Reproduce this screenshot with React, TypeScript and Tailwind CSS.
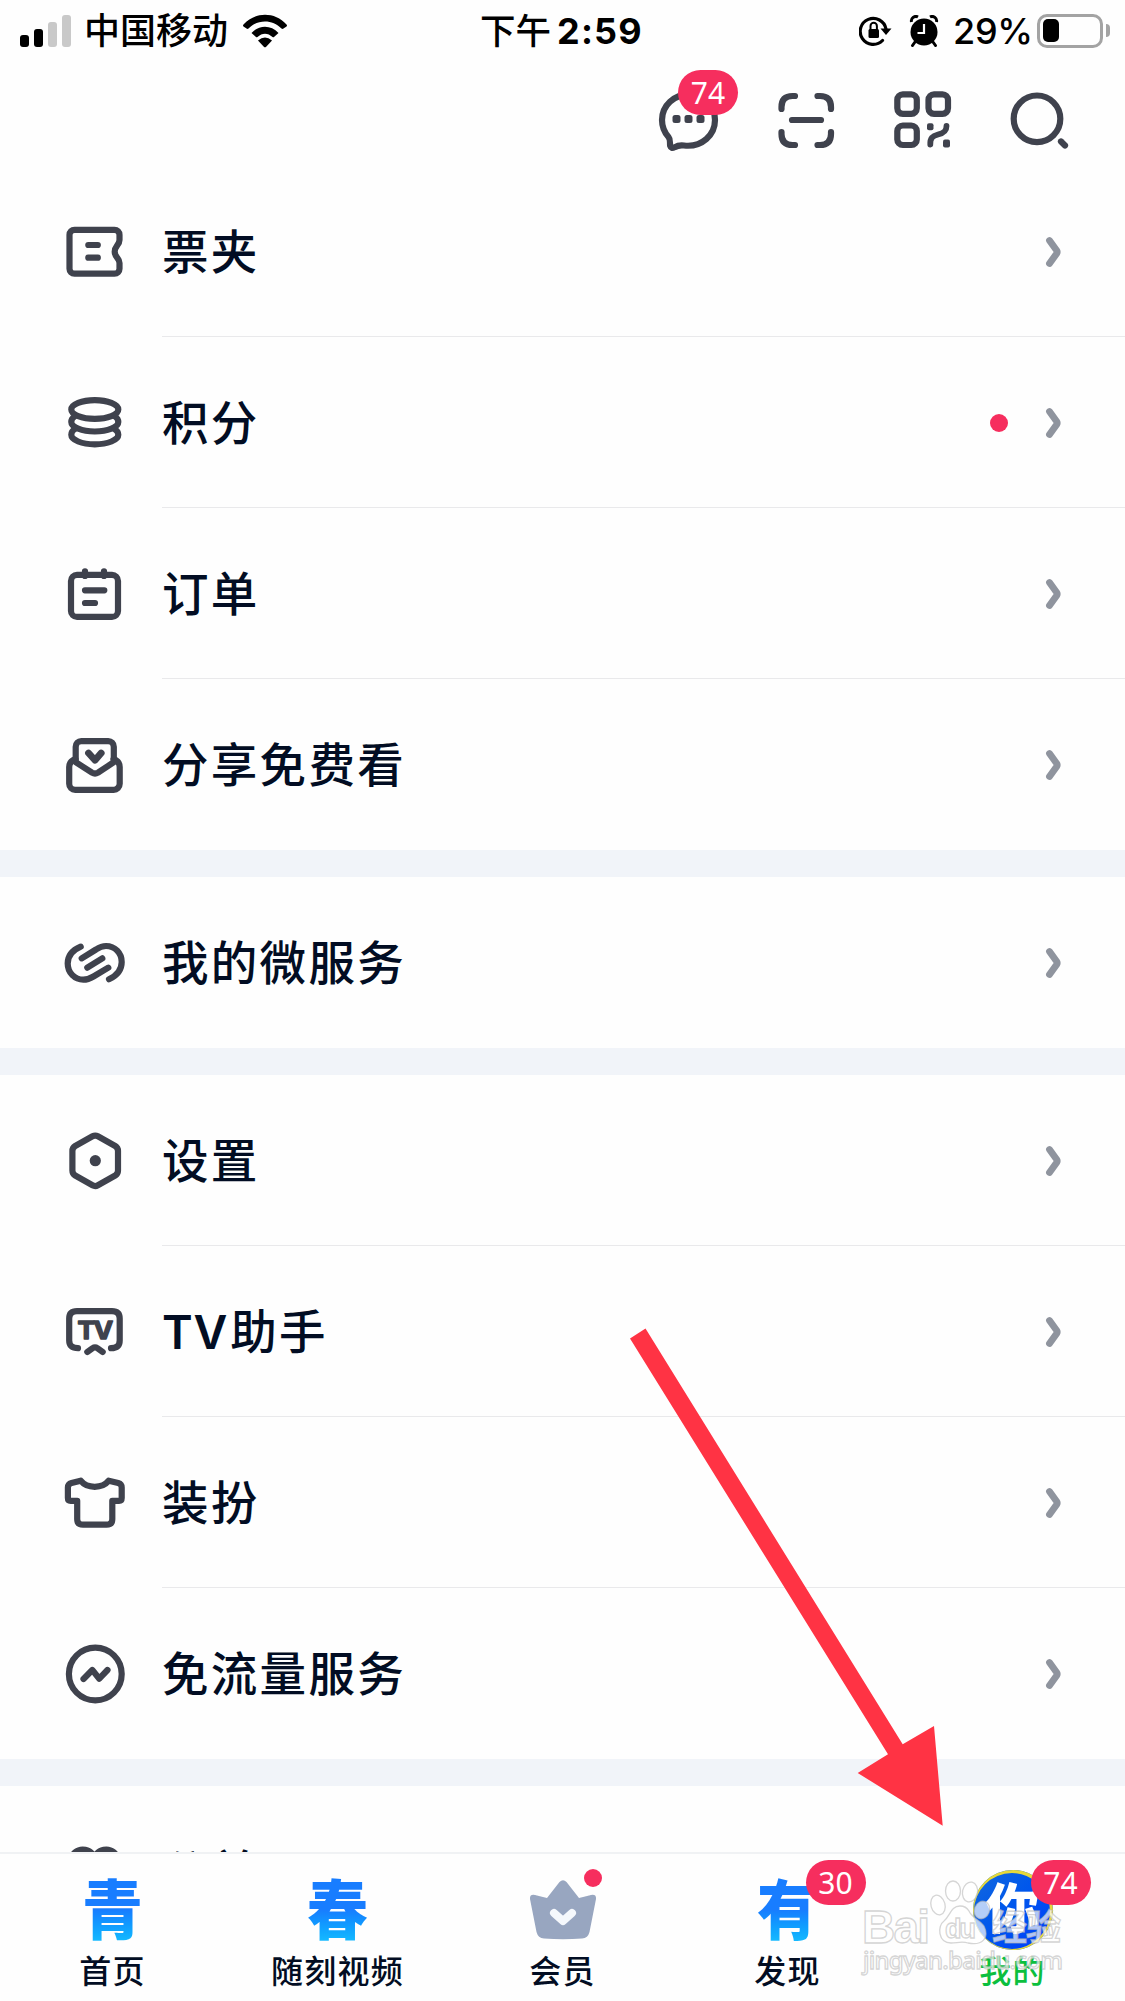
import type { ReactNode } from "react";

const cjk = "font-['Inter','Noto_Sans_CJK_SC',sans-serif]";

function LineIcon({ children, size = 63 }: { children: ReactNode; size?: number }) {
  return (
    <svg
      width={size}
      height={size}
      viewBox={`0 0 ${size} ${size}`}
      fill="none"
      stroke="#3f424d"
      strokeWidth={6.2}
      strokeLinecap="round"
      strokeLinejoin="round"
      className="shrink-0"
    >
      {children}
    </svg>
  );
}

const icons: Record<string, ReactNode> = {
  ticket: (
    <>
      <path d="M10.5 9.8H50.5a5 5 0 0 1 5 5V20C55.5 25 50.7 26 50.7 31.7S55.5 38 55.5 43V48.7a5 5 0 0 1-5 5H10.5a5 5 0 0 1-5-5V14.8a5 5 0 0 1 5-5Z" />
      <path d="M24.3 25H33.8M24.3 37.7H33.8" />
    </>
  ),
  coins: (
    <>
      <ellipse cx="30.8" cy="18.5" rx="23.5" ry="9.3" />
      <path d="M10.5 25.5C8.3 27 7.3 29 7.3 31C7.3 36.2 17.8 40.5 30.8 40.5S54.3 36.2 54.3 31C54.3 29 53.3 27 51 25.5" />
      <path d="M10.5 38.3C8.3 39.8 7.3 41.8 7.3 43.8C7.3 49 17.8 53.3 30.8 53.3S54.3 49 54.3 43.8C54.3 41.8 53.3 39.8 51 38.3" />
    </>
  ),
  order: (
    <>
      <rect x="7" y="12.9" width="47" height="42" rx="6" />
      <path d="M21 9.3V14M40 9.3V14M21 28.3H40.3M21 41H31" />
    </>
  ),
  share: (
    <>
      <path d="M17.2 8.2H44.3a5.5 5.5 0 0 1 5.5 5.5V29.2L34 39.6Q31 41.4 28 39.6L11.7 29.2V13.7a5.5 5.5 0 0 1 5.5-5.5Z" />
      <path d="M11.5 26C7.5 27.5 5.2 30 5.2 34V50.8a6 6 0 0 0 6 6H49.7a6 6 0 0 0 6-6V34C55.7 30 53.5 27.5 49.5 26" />
      <path d="M24.5 20L31 27.2L37.2 20" strokeWidth="6.8" />
    </>
  ),
  micro: (
    <>
      <path d="M16.7 15.7C9 19 3.7 25 3.7 32.5C3.7 42 11 48.7 19.3 48.7C24 48.7 27 47 29.5 45.5L44.3 36.7" />
      <path d="M17.7 27.3L32 18.5C35 16.5 38 15 42 15C51 15 57.7 22 57.7 31C57.7 39 52 45 45 48.3" />
      <path d="M23.3 36.7L38.3 27.3" />
    </>
  ),
  settings: (
    <>
      <path d="M28.5 7.3Q31.2 5.8 33.9 7.3L51.2 17Q54 18.7 54 22V41.5Q54 44.8 51.2 46.5L33.9 56.3Q31.2 57.8 28.5 56.3L11.2 46.5Q8.4 44.8 8.4 41.5V22Q8.4 18.7 11.2 17Z" />
      <circle cx="31.3" cy="31.7" r="5.6" fill="#3f424d" stroke="none" />
    </>
  ),
  tv: (
    <>
      <path d="M14 48.2C8 48.2 5.2 45.5 5.2 40.5V18.5C5.2 13.5 8 11.1 13 11.1H48C53 11.1 55.7 13.5 55.7 18.5V40.5C55.7 45.5 53 48.2 47 48.2" />
      <path d="M23.3 52L28.5 48.2Q31 46.5 33.5 48.2L38.7 52" />
      <text
        x="13.5"
        y="38.5"
        letterSpacing="-1.5"
        textLength="34"
        lengthAdjust="spacingAndGlyphs"
        fill="#3f424d"
        stroke="#3f424d"
        strokeWidth="1.4"
        className="font-['Inter'] text-[24.5px] font-bold"
      >
        TV
      </text>
    </>
  ),
  shirt: (
    <path d="M16.7 9.7L7.5 12Q3.9 13 3.9 16.5V27Q3.9 29.8 6.7 29.8H13.2V48Q13.2 53.7 19 53.7H42.5Q48.3 53.7 48.3 48V29.8H55Q57.7 29.8 57.7 27V16.5Q57.7 13 54.2 12L44.7 9.7Q40 15.8 30.7 15.8T16.7 9.7Z" />
  ),
  flow: (
    <>
      <circle cx="31.3" cy="32" r="26.4" />
      <path d="M19.5 37L28.3 28L35.3 36.7L43.5 28" />
    </>
  ),
  heart: (
    <path d="M30.5 17C26 9 17 7.5 11 12.5C3 20 5 30 11 37L30.5 55L50 37C56 30 58 20 50 12.5C44 7.5 35 9 30.5 17Z" />
  ),
};

type Item = { icon: string; label: string; dot?: boolean };

const groups: Item[][] = [
  [
    { icon: "ticket", label: "票夹" },
    { icon: "coins", label: "积分", dot: true },
    { icon: "order", label: "订单" },
    { icon: "share", label: "分享免费看" },
  ],
  [{ icon: "micro", label: "我的微服务" }],
  [
    { icon: "settings", label: "设置" },
    { icon: "tv", label: "TV助手" },
    { icon: "shirt", label: "装扮" },
    { icon: "flow", label: "免流量服务" },
  ],
  [{ icon: "heart", label: "公益" }],
];

function Row({ item, last }: { item: Item; last: boolean }) {
  const latin = item.label.startsWith("TV");
  return (
    <li className="flex h-[171px] items-center pl-[64px]">
      <LineIcon>{icons[item.icon]}</LineIcon>
      <div
        className={`ml-[35px] flex h-full flex-1 items-center border-b pt-[2px] pr-[64px] ${
          last ? "border-transparent" : "border-[#e9e9eb]"
        }`}
      >
        <span className="flex-1 pt-[1px] text-[46.5px] leading-none font-medium tracking-[2.3px] whitespace-nowrap text-[#020d23]">
          {latin && <span className="mr-[2px] font-semibold tracking-[0.8px]">TV</span>}
          {latin ? item.label.slice(2) : item.label}
        </span>
        {item.dot && <span className="mr-[33px] h-[18px] w-[18px] rounded-full bg-[#f62e5e]" />}
        <svg width="20" height="32" viewBox="0 0 20 32" fill="none">
          <path
            d="M8.5 4.5L15.700 14.500Q16.700 16 15.700 17.500L8.5 27.5"
            stroke="#8f949e"
            strokeWidth="6.8"
            strokeLinecap="round"
            strokeLinejoin="round"
          />
        </svg>
      </div>
    </li>
  );
}

function Badge({ children, className }: { children: ReactNode; className: string }) {
  return (
    <span
      className={`absolute flex h-[45px] w-[60px] items-center justify-center rounded-full bg-[#f62e5e] font-['Noto_Sans'] text-[30px] leading-none text-white ${className}`}
    >
      {children}
    </span>
  );
}

function StatusBar() {
  return (
    <div className="flex h-[61px] items-center pl-[20px] text-[36px] leading-none whitespace-nowrap text-black">
      <div className="flex h-[32px] items-end gap-[5px]">
        <i className="h-[12px] w-[9px] rounded-[3px] bg-black" />
        <i className="h-[18px] w-[9px] rounded-[3px] bg-black" />
        <i className="h-[25px] w-[9px] rounded-[3px] bg-[#c9c9c9]" />
        <i className="h-[32px] w-[9px] rounded-[3px] bg-[#c9c9c9]" />
      </div>
      <span className="ml-[13px] w-[144px] shrink-0 pt-[1px] font-medium">中国移动</span>
      <svg className="ml-[14px] shrink-0" width="46" height="34" viewBox="0 0 46 34">
        <path d="M1.5 10.500C13-2.500 33-2.500 44.500 10.500Q45.500 11.500 44.500 12.500L41.500 14.500Q40.500 15.300 39.500 14.500C30.500 5 15.500 5 6.500 14.500Q5.500 15.300 4.500 14.500L1.500 12.500Q.5 11.500 1.500 10.500Z" />
        <path d="M9.500 19C17 10.500 29 10.500 36.500 19L32 23Q31.500 23.500 30.500 23C26 18.500 20 18.500 15.500 23Q14.500 23.500 14 23Z" />
        <path d="M16 26.500Q23 20.500 30 26.500L24.200 32.700Q23 33.700 21.800 32.700Z" />
      </svg>
      <span className="ml-[192px] w-[70px] shrink-0 pt-[2px] text-[35.5px] font-medium">下午</span>
      <span className="ml-[7px] w-[89px] shrink-0 pt-[1px] font-bold tracking-[1.2px]">2:59</span>
      <svg className="ml-[213px] shrink-0" width="33" height="32" viewBox="0 0 33 32" fill="none">
        <path d="M27 14A13 13 0 1 0 23.500 25.500" stroke="#000" strokeWidth="3.200" strokeLinecap="round" />
        <path d="M21.500 13.500H32.500L27 20Z" fill="#000" />
        <rect x="9.500" y="14" width="10.500" height="9" rx="1.500" fill="#000" />
        <path d="M11.500 15V11a3.200 3.200 0 0 1 6.400 0V15" stroke="#000" strokeWidth="2" />
      </svg>
      <svg className="ml-[17px] shrink-0" width="30" height="32" viewBox="0 0 30 32" fill="none">
        <circle cx="15" cy="17" r="13.500" fill="#000" />
        <path d="M2.500 7A4.500 4.500 0 0 1 9 2M27.500 7A4.500 4.500 0 0 0 21 2" stroke="#000" strokeWidth="3" />
        <path d="M6 27L3.500 30.500M24 27L26.500 30.500" stroke="#000" strokeWidth="3" strokeLinecap="round" />
        <path d="M15 9V18H8.500" stroke="#fff" strokeWidth="2.200" />
      </svg>
      <span className="ml-[14px] w-[76px] shrink-0 pt-[1px] font-medium tracking-[-0.3px]">29%</span>
      <span className="ml-[8px] flex h-[34px] w-[66px] shrink-0 items-center rounded-[10px] border-[3px] border-[#a3a3a3] pl-[3px]">
        <i className="h-[23px] w-[16px] rounded-[5px] bg-black" />
      </span>
      <i className="ml-[3px] h-[13px] w-[4px] shrink-0 rounded-r-full bg-[#a3a3a3]" />
    </div>
  );
}

function Header() {
  return (
    <header className="h-[166px] shrink-0 bg-[#fefefe]">
      <StatusBar />
      <div className="flex justify-end gap-[53px] pt-[28px] pr-[53px]">
        <div className="relative">
          <LineIcon size={64}>
            <path d="M32.5 5.3C17 5.3 5 16.5 5 31C5 39 8 44 11.5 48C14 51 12.5 54 13.2 57Q14 60 17.5 58.3C20.5 56.5 23 56 27 56.5C45 58.5 58 46 58 31C58 16.5 47.5 5.3 32.5 5.3Z" />
            <g fill="#3f424d" stroke="none">
              <rect x="15.5" y="26" width="8" height="8" rx="2.5" />
              <rect x="27.5" y="26" width="8" height="8" rx="2.5" />
              <rect x="39.5" y="26" width="8" height="8" rx="2.5" />
            </g>
          </LineIcon>
          <Badge className="-top-[19px] left-[21px]">74</Badge>
        </div>
        <LineIcon size={64}>
          <path d="M7.5 20V18Q7.5 7 18.500 7H21M43.500 7H46Q57 7 57 18V20M7.5 43V45Q7.5 56 18.500 56H21M43.500 56H46Q57 56 57 45V43M18 31H47" />
        </LineIcon>
        <LineIcon size={64}>
          <rect x="6.3" y="5.3" width="19.5" height="19.5" rx="5.5" />
          <rect x="37.5" y="5.3" width="19.5" height="19.5" rx="5.5" />
          <rect x="6.3" y="36.5" width="19.5" height="19.5" rx="5.5" />
          <path d="M39.3 55.5C39 49 41.5 47 47 45.500C53 44 55.5 42 55.5 37" strokeWidth="5.8" />
          <rect x="36" y="34.3" width="6.5" height="7" rx="2" fill="#3f424d" stroke="none" />
          <rect x="52" y="50.5" width="7" height="8" rx="2" fill="#3f424d" stroke="none" />
        </LineIcon>
        <LineIcon size={64}>
          <circle cx="29" cy="29.8" r="23.3" />
          <path d="M53 52.500L57 56.500" />
        </LineIcon>
      </div>
    </header>
  );
}

function Tab({ label, active, children }: { label: string; active?: boolean; children: ReactNode }) {
  return (
    <div className="flex w-[225px] flex-col items-center">
      <div className="relative flex h-[100px] w-[80px] items-center justify-center pt-[11px]">{children}</div>
      <span
        className={`text-[32px] leading-[36px] font-medium tracking-[1.3px] ${
          active ? "text-[#0cbf3e]" : "text-[#020d23]"
        }`}
      >
        {label}
      </span>
    </div>
  );
}

function FestiveGlyph({ children }: { children: string }) {
  return (
    <span className="scale-y-107 bg-linear-to-b from-[#187dff] from-50% to-[#16b9ff] to-90% bg-clip-text text-[61px] leading-[72px] font-black text-transparent">
      {children}
    </span>
  );
}

function TabBar() {
  return (
    <nav className="relative flex h-[149px] shrink-0 border-t-2 border-[#f0f2f4] bg-[#fefefe]">
      <Tab label="首页">
        <FestiveGlyph>青</FestiveGlyph>
      </Tab>
      <Tab label="随刻视频">
        <FestiveGlyph>春</FestiveGlyph>
      </Tab>
      <Tab label="会员">
        <svg width="68" height="62" viewBox="0 0 68 62" className="shrink-0">
          <path
            d="M30.5 3Q34 -.5 37.5 3L50 19L62 16Q67.5 15 67 20L60.5 53Q59 59 53 59.5Q34 61 15 59.5Q9 59 7.5 53L1 20Q.5 15 6 16L18 19Z"
            fill="#98a6c0"
          />
          <path d="M25 34L34 42L43 34" fill="none" stroke="#f5f8fc" strokeWidth="8" strokeLinecap="round" strokeLinejoin="round" />
        </svg>
        <span className="absolute top-[15px] left-[61px] h-[18px] w-[18px] rounded-full bg-[#f62e5e]" />
      </Tab>
      <Tab label="发现">
        <FestiveGlyph>有</FestiveGlyph>
        <Badge className="top-[6px] left-[58px]">30</Badge>
      </Tab>
      <Tab label="我的" active>
        <span className="flex h-[80px] w-[80px] shrink-0 items-center justify-center rounded-full bg-linear-to-br from-[#1668dc] to-[#0038ff] text-[54px] leading-none font-black text-white shadow-[inset_-1px_1px_0_2px_#e5d93a]">
          你
        </span>
        <Badge className="top-[6px] left-[58px]">74</Badge>
      </Tab>
    </nav>
  );
}

// watermark over the right end of the tab bar
function Watermark() {
  return (
    <svg
      className="pointer-events-none absolute top-[1870px] left-[850px]"
      width="230"
      height="120"
      viewBox="0 0 230 120"
      fill="#fff"
      fillOpacity="0.7"
      stroke="#b9b9b9"
      strokeOpacity="0.6"
      strokeWidth="1.3"
    >
      <ellipse cx="88" cy="35" rx="7" ry="10" transform="rotate(-15 88 35)" />
      <ellipse cx="103" cy="21" rx="7.5" ry="10" />
      <ellipse cx="120" cy="22" rx="7.5" ry="10" transform="rotate(12 120 22)" />
      <ellipse cx="132" cy="40" rx="7.5" ry="9" transform="rotate(20 132 40)" />
      <path d="M110 36C101 36 100 46 94 51C87 56 88 73 101 73C107 73 112 71 118 73C132 76 140 68 134 56C130 50 121 47 119 41Q116 36 110 36Z" />
      <text x="12" y="73" textLength="68" className="font-['Liberation_Sans'] text-[46px] font-bold">
        Bai
      </text>
      <text x="95" y="68" textLength="31" className="font-['Liberation_Sans'] text-[27px] font-bold">
        du
      </text>
      <text x="142" y="70" textLength="69" className="font-['Noto_Sans_CJK_SC'] text-[35px] font-bold">
        经验
      </text>
      <text x="13" y="99" textLength="200" className="font-['Noto_Sans'] text-[24px] font-medium">
        jingyan.baidu.com
      </text>
    </svg>
  );
}

export default function App() {
  return (
    <div className={`relative flex h-[2001px] w-[1125px] flex-col overflow-hidden bg-[#fefefe] ${cjk}`}>
      <Header />
      <main className="flex min-h-0 flex-1 flex-col overflow-hidden">
        {groups.map((group, g) => (
          <ul key={g} className={g > 0 ? "border-t-[27px] border-[#f1f4f9]" : ""}>
            {group.map((item, i) => (
              <Row key={item.label} item={item} last={i === group.length - 1} />
            ))}
          </ul>
        ))}
      </main>
      <TabBar />
      <svg
        className="pointer-events-none absolute top-[1320px] left-[620px]"
        width="330"
        height="510"
        viewBox="620 1320 330 510"
      >
        <path d="M645.5 1328.500L902.7 1744.3L934 1726L942.7 1825.7L857.7 1773L888 1754.3L630 1338.500Z" fill="#ff3344" />
      </svg>
      <Watermark />
    </div>
  );
}
